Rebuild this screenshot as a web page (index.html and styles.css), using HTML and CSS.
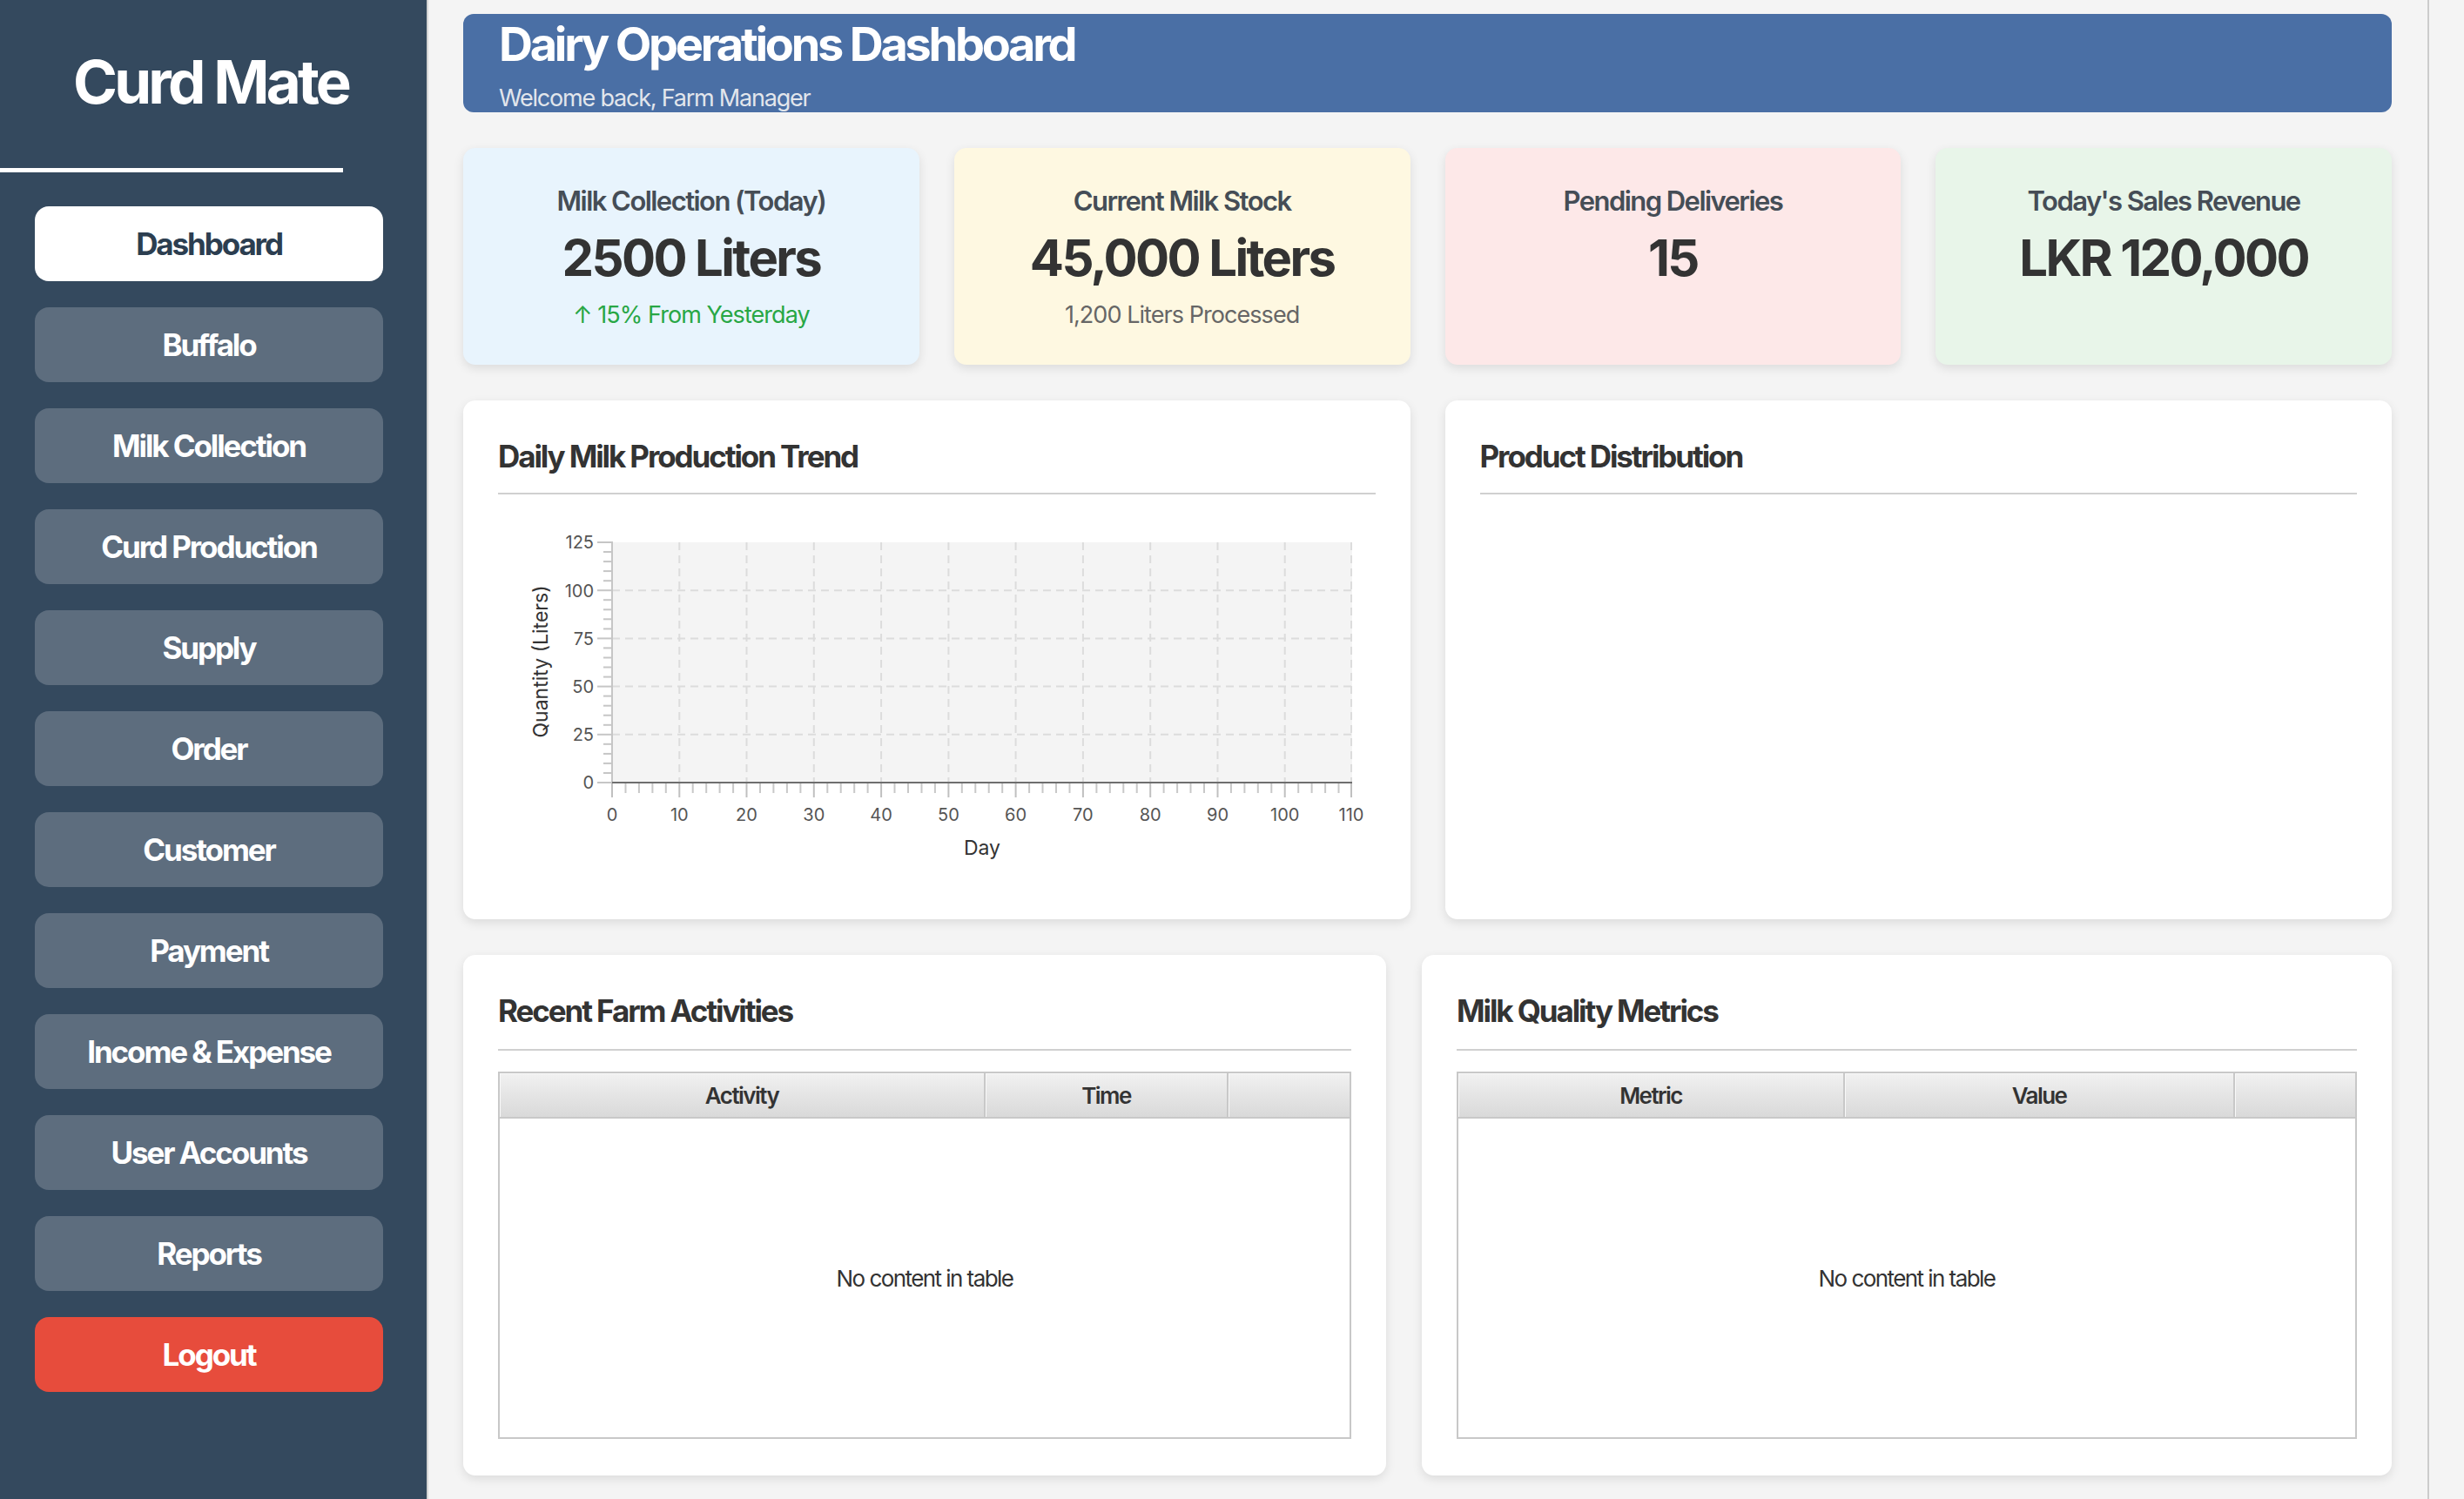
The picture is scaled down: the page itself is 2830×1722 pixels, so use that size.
FILE: index.html
```html
<!DOCTYPE html>
<html lang="en">
<head>
<meta charset="utf-8">
<title>Curd Mate - Dashboard</title>
<link rel="stylesheet" href="styles.css">
</head>
<body>
<div class="app">
  <aside class="sidebar">
    <div class="brand">Curd Mate</div>
    <div class="brand-rule"></div>
    <nav class="nav">
      <button class="nav-btn active">Dashboard</button>
      <button class="nav-btn">Buffalo</button>
      <button class="nav-btn">Milk Collection</button>
      <button class="nav-btn">Curd Production</button>
      <button class="nav-btn">Supply</button>
      <button class="nav-btn">Order</button>
      <button class="nav-btn">Customer</button>
      <button class="nav-btn">Payment</button>
      <button class="nav-btn">Income &amp; Expense</button>
      <button class="nav-btn">User Accounts</button>
      <button class="nav-btn">Reports</button>
      <button class="nav-btn logout">Logout</button>
    </nav>
  </aside>

  <main class="main">
    <div class="content">
      <header class="banner">
        <div class="banner-title">Dairy Operations Dashboard</div>
        <div class="banner-sub">Welcome back, Farm Manager</div>
      </header>

      <section class="stats">
        <div class="stat stat-blue">
          <div class="stat-label">Milk Collection (Today)</div>
          <div class="stat-value">2500 Liters</div>
          <div class="stat-note up">↑ 15% From Yesterday</div>
        </div>
        <div class="stat stat-yellow">
          <div class="stat-label">Current Milk Stock</div>
          <div class="stat-value">45,000 Liters</div>
          <div class="stat-note">1,200 Liters Processed</div>
        </div>
        <div class="stat stat-red">
          <div class="stat-label">Pending Deliveries</div>
          <div class="stat-value">15</div>
        </div>
        <div class="stat stat-green">
          <div class="stat-label">Today's Sales Revenue</div>
          <div class="stat-value">LKR 120,000</div>
        </div>
      </section>

      <section class="charts">
        <div class="panel">
          <div class="panel-title">Daily Milk Production Trend</div>
          <svg class="chart" width="1007" height="448" viewBox="0 0 1007 448">
            <rect x="131" y="55" width="850" height="276" fill="#f4f4f4"/>
            <g stroke="#dcdcdc" stroke-width="2" stroke-dasharray="9 6">
              <line x1="208.3" y1="55" x2="208.3" y2="331"/>
              <line x1="285.5" y1="55" x2="285.5" y2="331"/>
              <line x1="362.8" y1="55" x2="362.8" y2="331"/>
              <line x1="440.1" y1="55" x2="440.1" y2="331"/>
              <line x1="517.4" y1="55" x2="517.4" y2="331"/>
              <line x1="594.6" y1="55" x2="594.6" y2="331"/>
              <line x1="671.9" y1="55" x2="671.9" y2="331"/>
              <line x1="749.2" y1="55" x2="749.2" y2="331"/>
              <line x1="826.5" y1="55" x2="826.5" y2="331"/>
              <line x1="903.7" y1="55" x2="903.7" y2="331"/>
              <line x1="980" y1="55" x2="980" y2="331"/>
              <line x1="131" y1="110.2" x2="981" y2="110.2"/>
              <line x1="131" y1="165.4" x2="981" y2="165.4"/>
              <line x1="131" y1="220.6" x2="981" y2="220.6"/>
              <line x1="131" y1="275.8" x2="981" y2="275.8"/>
            </g>
            <g stroke="#c6c6c6" stroke-width="2">
              <line x1="131" y1="54" x2="131" y2="332"/>
              <line x1="114" y1="55" x2="131" y2="55"/>
              <line x1="114" y1="110.2" x2="131" y2="110.2"/>
              <line x1="114" y1="165.4" x2="131" y2="165.4"/>
              <line x1="114" y1="220.6" x2="131" y2="220.6"/>
              <line x1="114" y1="275.8" x2="131" y2="275.8"/>
              <line x1="114" y1="331" x2="131" y2="331"/>
              <line x1="121" y1="66" x2="131" y2="66"/>
              <line x1="121" y1="77.1" x2="131" y2="77.1"/>
              <line x1="121" y1="88.1" x2="131" y2="88.1"/>
              <line x1="121" y1="99.2" x2="131" y2="99.2"/>
              <line x1="121" y1="121.2" x2="131" y2="121.2"/>
              <line x1="121" y1="132.3" x2="131" y2="132.3"/>
              <line x1="121" y1="143.3" x2="131" y2="143.3"/>
              <line x1="121" y1="154.4" x2="131" y2="154.4"/>
              <line x1="121" y1="176.4" x2="131" y2="176.4"/>
              <line x1="121" y1="187.5" x2="131" y2="187.5"/>
              <line x1="121" y1="198.5" x2="131" y2="198.5"/>
              <line x1="121" y1="209.6" x2="131" y2="209.6"/>
              <line x1="121" y1="231.6" x2="131" y2="231.6"/>
              <line x1="121" y1="242.7" x2="131" y2="242.7"/>
              <line x1="121" y1="253.7" x2="131" y2="253.7"/>
              <line x1="121" y1="264.8" x2="131" y2="264.8"/>
              <line x1="121" y1="286.8" x2="131" y2="286.8"/>
              <line x1="121" y1="297.9" x2="131" y2="297.9"/>
              <line x1="121" y1="308.9" x2="131" y2="308.9"/>
              <line x1="121" y1="320" x2="131" y2="320"/>
            </g>
            <g stroke="#c0c0c0" stroke-width="2">
              <line x1="131" y1="331" x2="131" y2="348"/>
              <line x1="208.3" y1="331" x2="208.3" y2="348"/>
              <line x1="285.5" y1="331" x2="285.5" y2="348"/>
              <line x1="362.8" y1="331" x2="362.8" y2="348"/>
              <line x1="440.1" y1="331" x2="440.1" y2="348"/>
              <line x1="517.4" y1="331" x2="517.4" y2="348"/>
              <line x1="594.6" y1="331" x2="594.6" y2="348"/>
              <line x1="671.9" y1="331" x2="671.9" y2="348"/>
              <line x1="749.2" y1="331" x2="749.2" y2="348"/>
              <line x1="826.5" y1="331" x2="826.5" y2="348"/>
              <line x1="903.7" y1="331" x2="903.7" y2="348"/>
              <line x1="980" y1="331" x2="980" y2="348"/>
            </g>
            <g stroke="#c8c8c8" stroke-width="2">
              <line x1="146.5" y1="331" x2="146.5" y2="343"/><line x1="161.9" y1="331" x2="161.9" y2="343"/><line x1="177.4" y1="331" x2="177.4" y2="343"/><line x1="192.8" y1="331" x2="192.8" y2="343"/>
              <line x1="223.7" y1="331" x2="223.7" y2="343"/><line x1="239.2" y1="331" x2="239.2" y2="343"/><line x1="254.6" y1="331" x2="254.6" y2="343"/><line x1="270.1" y1="331" x2="270.1" y2="343"/>
              <line x1="301" y1="331" x2="301" y2="343"/><line x1="316.4" y1="331" x2="316.4" y2="343"/><line x1="331.9" y1="331" x2="331.9" y2="343"/><line x1="347.4" y1="331" x2="347.4" y2="343"/>
              <line x1="378.3" y1="331" x2="378.3" y2="343"/><line x1="393.7" y1="331" x2="393.7" y2="343"/><line x1="409.2" y1="331" x2="409.2" y2="343"/><line x1="424.6" y1="331" x2="424.6" y2="343"/>
              <line x1="455.5" y1="331" x2="455.5" y2="343"/><line x1="471" y1="331" x2="471" y2="343"/><line x1="486.5" y1="331" x2="486.5" y2="343"/><line x1="501.9" y1="331" x2="501.9" y2="343"/>
              <line x1="532.8" y1="331" x2="532.8" y2="343"/><line x1="548.3" y1="331" x2="548.3" y2="343"/><line x1="563.7" y1="331" x2="563.7" y2="343"/><line x1="579.2" y1="331" x2="579.2" y2="343"/>
              <line x1="610.1" y1="331" x2="610.1" y2="343"/><line x1="625.5" y1="331" x2="625.5" y2="343"/><line x1="641" y1="331" x2="641" y2="343"/><line x1="656.5" y1="331" x2="656.5" y2="343"/>
              <line x1="687.4" y1="331" x2="687.4" y2="343"/><line x1="702.8" y1="331" x2="702.8" y2="343"/><line x1="718.3" y1="331" x2="718.3" y2="343"/><line x1="733.7" y1="331" x2="733.7" y2="343"/>
              <line x1="764.6" y1="331" x2="764.6" y2="343"/><line x1="780.1" y1="331" x2="780.1" y2="343"/><line x1="795.5" y1="331" x2="795.5" y2="343"/><line x1="811" y1="331" x2="811" y2="343"/>
              <line x1="841.9" y1="331" x2="841.9" y2="343"/><line x1="857.4" y1="331" x2="857.4" y2="343"/><line x1="872.8" y1="331" x2="872.8" y2="343"/><line x1="888.3" y1="331" x2="888.3" y2="343"/>
              <line x1="919.2" y1="331" x2="919.2" y2="343"/><line x1="934.6" y1="331" x2="934.6" y2="343"/><line x1="950.1" y1="331" x2="950.1" y2="343"/><line x1="965.5" y1="331" x2="965.5" y2="343"/>
            </g>
            <line x1="131" y1="331" x2="981" y2="331" stroke="#6e6e6e" stroke-width="2"/>
            <g class="tick-label" text-anchor="end">
              <text x="110" y="62.3">125</text>
              <text x="110" y="117.5">100</text>
              <text x="110" y="172.7">75</text>
              <text x="110" y="227.9">50</text>
              <text x="110" y="283.1">25</text>
              <text x="110" y="338.3">0</text>
            </g>
            <g class="tick-label" text-anchor="middle">
              <text x="131" y="375">0</text>
              <text x="208.3" y="375">10</text>
              <text x="285.5" y="375">20</text>
              <text x="362.8" y="375">30</text>
              <text x="440.1" y="375">40</text>
              <text x="517.4" y="375">50</text>
              <text x="594.6" y="375">60</text>
              <text x="671.9" y="375">70</text>
              <text x="749.2" y="375">80</text>
              <text x="826.5" y="375">90</text>
              <text x="903.7" y="375">100</text>
              <text x="980" y="375">110</text>
            </g>
            <text class="axis-title" x="556" y="414" text-anchor="middle">Day</text>
            <text class="axis-title" x="0" y="0" text-anchor="middle" transform="translate(57 192) rotate(-90)">Quantity (Liters)</text>
          </svg>
        </div>
        <div class="panel">
          <div class="panel-title">Product Distribution</div>
        </div>
      </section>

      <section class="tables">
        <div class="panel table-panel">
          <div class="panel-title">Recent Farm Activities</div>
          <div class="grid-table">
            <div class="grid-head">
              <div class="col activity">Activity</div>
              <div class="col time">Time</div>
              <div class="col filler"></div>
            </div>
            <div class="grid-body">No content in table</div>
          </div>
        </div>
        <div class="panel table-panel">
          <div class="panel-title">Milk Quality Metrics</div>
          <div class="grid-table">
            <div class="grid-head">
              <div class="col metric">Metric</div>
              <div class="col value">Value</div>
              <div class="col filler"></div>
            </div>
            <div class="grid-body">No content in table</div>
          </div>
        </div>
      </section>
    </div>
    <div class="scroll-edge"></div>
  </main>
</div>
</body>
</html>
```

FILE: styles.css
```css
* { box-sizing: border-box; }

html, body {
  margin: 0;
  padding: 0;
}

body {
  width: 2830px;
  height: 1722px;
  overflow: hidden;
  background: #f4f4f4;
  font-family: "Inter", "Noto Sans", "Liberation Sans", sans-serif;
  color: #333333;
}

.app {
  display: flex;
  height: 1722px;
}

/* ---------- Sidebar ---------- */
.sidebar {
  width: 492px;
  flex: 0 0 492px;
  background: #34495e;
  border-right: 2px solid #d4d4d4;
  padding-top: 50px;
  display: flex;
  flex-direction: column;
}

.brand {
  color: #ffffff;
  font-weight: 700;
  font-size: 69px;
  line-height: 88px;
  letter-spacing: -0.055em;
  text-align: center;
  padding-right: 6px;
}

.brand-rule {
  width: 394px;
  height: 5px;
  background: #ffffff;
  margin-top: 55px;
}

.nav {
  margin-top: 39px;
  display: flex;
  flex-direction: column;
  gap: 30px;
  padding-left: 40px;
}

.nav-btn {
  width: 400px;
  height: 86px;
  border: none;
  border-radius: 16px;
  background: #5d6d7e;
  color: #ffffff;
  font-family: inherit;
  font-weight: 700;
  font-size: 35px;
  letter-spacing: -0.06em;
  display: flex;
  align-items: center;
  justify-content: center;
  padding: 0;
}

.nav-btn.active {
  background: #ffffff;
  color: #2c3e50;
}

.nav-btn.logout {
  background: #e74c3c;
}

/* ---------- Main ---------- */
.main {
  flex: 1;
  display: flex;
}

.content {
  flex: 1;
  padding: 16px 41px 0 40px;
  display: flex;
  flex-direction: column;
}

.scroll-edge {
  width: 42px;
  flex: 0 0 42px;
  border-left: 2px solid #cccccc;
}

.banner {
  height: 113px;
  background: #4a6fa5;
  border-radius: 12px;
  padding: 2px 41px 0;
  overflow: hidden;
}

.banner-title {
  color: #ffffff;
  font-weight: 700;
  font-size: 54px;
  line-height: 66px;
  letter-spacing: -0.06em;
}

.banner-sub {
  color: #e2e6ec;
  font-size: 27px;
  line-height: 33px;
  margin-top: 12px;
  letter-spacing: -0.045em;
}

/* ---------- Stat cards ---------- */
.stats {
  margin-top: 41px;
  display: grid;
  grid-template-columns: repeat(4, 1fr);
  gap: 40px;
  height: 249px;
}

.stat {
  border-radius: 14px;
  box-shadow: 0 4px 12px rgba(0, 0, 0, 0.10);
  padding-top: 41px;
  text-align: center;
}

.stat-blue { background: #e8f4fd; }
.stat-yellow { background: #fef8e1; }
.stat-red { background: #fde8e8; }
.stat-green { background: #e8f5e9; }

.stat-label {
  color: #454d56;
  font-weight: 600;
  font-size: 31px;
  line-height: 40px;
  letter-spacing: -0.05em;
}

.stat-value {
  color: #333333;
  font-weight: 700;
  font-size: 58px;
  line-height: 70px;
  margin-top: 10px;
  letter-spacing: -0.045em;
}

.stat-note {
  color: #666666;
  font-size: 27px;
  line-height: 34px;
  margin-top: 14px;
  letter-spacing: -0.035em;
}

.stat-note.up {
  color: #28a745;
}

/* ---------- Panels ---------- */
.charts {
  margin-top: 41px;
  display: grid;
  grid-template-columns: 1fr 1fr;
  gap: 40px;
  height: 596px;
}

.panel {
  background: #ffffff;
  border-radius: 14px;
  box-shadow: 0 4px 12px rgba(0, 0, 0, 0.10);
  padding: 43px 40px 40px;
  display: flex;
  flex-direction: column;
}

.panel-title {
  color: #333333;
  font-weight: 700;
  font-size: 35px;
  line-height: 42px;
  letter-spacing: -0.06em;
  padding-bottom: 21px;
  border-bottom: 2px solid #d0d0d0;
}

.chart {
  display: block;
}

.tick-label {
  font-family: "Inter", "Liberation Sans", sans-serif;
  font-size: 20px;
  fill: #555555;
}

.axis-title {
  font-family: "Inter", "Liberation Sans", sans-serif;
  font-size: 23px;
  fill: #333333;
}

/* ---------- Tables ---------- */
.tables {
  margin-top: 41px;
  display: grid;
  grid-template-columns: 1060fr 1114fr;
  gap: 41px;
  height: 598px;
}

.table-panel .panel-title {
  padding-bottom: 23px;
}

.grid-table {
  margin-top: 24px;
  height: 422px;
  border: 2px solid #c8c8c8;
  display: flex;
  flex-direction: column;
}

.grid-head {
  height: 52px;
  flex: 0 0 52px;
  display: flex;
  background: linear-gradient(#f1f1f1, #d9d9d9);
  border-bottom: 2px solid #c8c8c8;
}

.col {
  display: flex;
  align-items: center;
  justify-content: center;
  font-weight: 600;
  font-size: 26px;
  letter-spacing: -0.06em;
  color: #333333;
  border-right: 2px solid #c8c8c8;
  box-shadow: inset 1px 1px 0 #f8f8f8;
}

.col.activity { width: 558px; }
.col.time { width: 279px; }
.col.metric { width: 444px; }
.col.value { width: 448px; }
.col.filler { flex: 1; border-right: none; }

.grid-body {
  flex: 1;
  background: #ffffff;
  display: flex;
  align-items: center;
  justify-content: center;
  font-size: 26px;
  letter-spacing: -0.06em;
  color: #333333;
}
```
